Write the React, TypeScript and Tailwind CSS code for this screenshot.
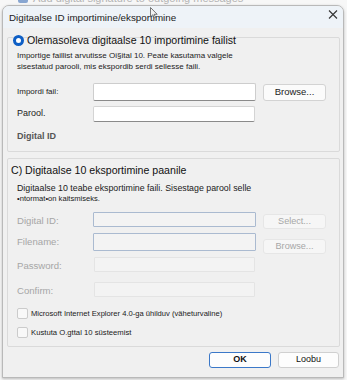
import React from "react";

const font = { fontFamily: '"Liberation Sans", Arial, sans-serif' };

export default function App() {
  return (
    <div
      className="relative w-[347px] h-[380px] overflow-hidden bg-[#f7f7f7] text-[#1a1a1a]"
      style={font}
    >
      {/* background window fragment */}
      <div className="h-[5px] overflow-hidden">
        <div className="flex items-center gap-[5px] pl-[18px] -mt-[8px] h-[12px]">
          <div className="w-[10px] h-[10px] rounded-[2px] bg-[#3d6fb8] opacity-60" />
          <span className="text-[11px] text-[#b4b4b4] leading-none">
            Add digital signature to outgoing messages
          </span>
        </div>
      </div>

      {/* dialog */}
      <div className="ml-[2px] w-[342px] h-[373px] border border-[#b9b9b9] rounded-t-[7px] bg-[#f0f0f0] flex flex-col overflow-hidden shadow-[0_1px_3px_rgba(0,0,0,0.25)]">
        {/* title bar */}
        <div className="h-[22px] shrink-0 bg-[#eef3f8] flex items-start justify-between pl-[6px] pr-[5px]">
          <span className="mt-[6px] text-[9.8px] leading-[11px] text-[#1b1b1b]">
            Digitaalse ID importimine/eksportimine
          </span>
          <svg width="10" height="9" viewBox="0 0 10 9" className="mt-[4px]">
            <path d="M1 0.5 L9 8.5 M9 0.5 L1 8.5" stroke="#333" strokeWidth="1.1" />
          </svg>
        </div>

        {/* body */}
        <div className="flex flex-col pl-[4px]">
          {/* group 1 */}
          <div className="mt-[9px] w-[333px] h-[115px] border border-[#dadada] rounded-[2px] flex flex-col">
            <div className="-mt-[4px] pl-[5px] flex items-center gap-[3px] h-[12px]">
              <div className="w-[11px] h-[11px] rounded-full border-[3px] border-[#0f5fc5] bg-white shrink-0" />
              <span className="text-[10.6px] leading-none text-[#111]">
                Olemasoleva digitaalse 10 importimine failist
              </span>
            </div>
            <div className="mt-[4px] pl-[9px] text-[8px] leading-[11px] text-[#222]">
              <div>Importige faillist arvutisse Oi§ital 10. Peate kasutama valgele</div>
              <div>sisestatud parooli, mis ekspordib serdi sellesse faili.</div>
            </div>
            <div className="mt-[11px] pl-[9px] flex items-center h-[18px]">
              <span className="w-[76px] text-[8px] text-[#222]">Impordi fail:</span>
              <div className="w-[163px] h-[18px] shrink-0 bg-white border border-[#cdcdcd] border-b-[#8a8a8a] rounded-[2px]" />
              <div className="ml-[7px] w-[63px] h-[17px] bg-[#fbfbfb] border border-[#d3d3d3] rounded-[3px] flex items-center justify-center text-[9.5px] text-[#222]">
                Browse...
              </div>
            </div>
            <div className="mt-[5px] pl-[9px] flex items-center h-[16px]">
              <span className="w-[76px] text-[9px] text-[#222]">Parool.</span>
              <div className="w-[162px] h-[16px] shrink-0 bg-white border border-[#d4d4d4] border-b-[#8a8a8a] rounded-[2px]" />
            </div>
            <div className="mt-[8px] pl-[9px] text-[9px] leading-[13px] font-bold text-[#555]">Digital ID</div>
          </div>

          {/* group 2 */}
          <div className="mt-[6px] w-[333px] h-[189px] border border-[#dadada] rounded-[2px] flex flex-col">
            <div className="mt-[5px] pl-[3px] text-[10.6px] leading-[13px] text-[#111]">
              C) Digitaalse 10 eksportimine paanile
            </div>
            <div className="mt-[6px] pl-[9px] text-[8.8px] leading-[11px] text-[#1a1a1a]">
              Digitaalse 10 teabe eksportimine faili. Sisestage parool selle
            </div>
            <div className="pl-[9px] text-[7.6px] leading-[9px] text-[#1a1a1a]">
              •ntormat•on kaitsmiseks.
            </div>
            <div className="mt-[9px] pl-[9px] flex items-start h-[17px]">
              <span className="w-[76px] mt-[1px] text-[9.6px] leading-[15px] text-[#a6a6a6]">Digital ID:</span>
              <div className="w-[163px] h-[15px] shrink-0 bg-[#f3f3f3] border border-[#aabad0] rounded-[1px]" />
              <div className="ml-[7px] mt-[2px] w-[63px] h-[15px] bg-[#f6f6f6] border border-[#e6e6e6] rounded-[3px] flex items-center justify-center text-[9.1px] text-[#a6a6a6]">
                Select...
              </div>
            </div>
            <div className="mt-[4px] pl-[9px] flex items-start h-[21px]">
              <span className="w-[76px] text-[9.6px] leading-[18px] text-[#a6a6a6]">Filename:</span>
              <div className="w-[163px] h-[18px] shrink-0 bg-[#f3f3f3] border border-[#aabad0] rounded-[1px]" />
              <div className="ml-[7px] mt-[6px] w-[63px] h-[15px] bg-[#f6f6f6] border border-[#e6e6e6] rounded-[3px] flex items-center justify-center text-[9.1px] text-[#a6a6a6]">
                Browse...
              </div>
            </div>
            <div className="mt-[3px] pl-[9px] flex items-start h-[15px]">
              <span className="w-[77px] mt-[1px] text-[9.6px] leading-[15px] text-[#a6a6a6]">Password:</span>
              <div className="w-[161px] h-[15px] shrink-0 bg-[#f3f3f3] border border-[#e4e4e4] rounded-[1px]" />
            </div>
            <div className="mt-[10px] pl-[9px] flex items-start h-[15px]">
              <span className="w-[77px] mt-[1px] text-[9.6px] leading-[15px] text-[#a6a6a6]">Confirm:</span>
              <div className="w-[161px] h-[15px] shrink-0 bg-[#f3f3f3] border border-[#e4e4e4] rounded-[1px]" />
            </div>
            <div className="mt-[11px] pl-[9px] flex items-center gap-[3px] h-[11px]">
              <div className="w-[11px] h-[11px] shrink-0 rounded-[2px] border border-[#cbcbcb] bg-[#f8f8f8]" />
              <span className="text-[7.6px] leading-none text-[#1a1a1a]">
                Microsoft Internet Explorer 4.0-ga ühilduv (väheturvaline)
              </span>
            </div>
            <div className="mt-[8px] pl-[9px] flex items-center gap-[3px] h-[11px]">
              <div className="w-[11px] h-[11px] shrink-0 rounded-[2px] border border-[#cbcbcb] bg-[#f8f8f8]" />
              <span className="text-[7.7px] leading-none text-[#1a1a1a]">Kustuta O.gttal 10 süsteemist</span>
            </div>
          </div>

          {/* buttons */}
          <div className="mt-[5px] w-[333px] flex justify-end gap-[7px] pr-[1px]">
            <div className="w-[62px] h-[16px] bg-[#fdfdfd] border border-[#3b78c8] rounded-[3px] flex items-center justify-center text-[9px] font-semibold text-[#111]">
              OK
            </div>
            <div className="w-[61px] h-[16px] bg-[#fdfdfd] border border-[#d0d0d0] rounded-[3px] flex items-center justify-center text-[9px] text-[#111]">
              Loobu
            </div>
          </div>
        </div>
      </div>

      {/* mouse cursor */}
      <svg
        className="absolute left-[150px] top-[7px]"
        width="8"
        height="12"
        viewBox="0 0 8 12"
      >
        <path d="M0.5 0.5 L0.5 10 L2.8 7.8 L4.3 11 L5.6 10.4 L4.1 7.3 L7.2 7.3 Z" fill="#f2f2f2" stroke="#555" strokeWidth="0.8" />
      </svg>
    </div>
  );
}
